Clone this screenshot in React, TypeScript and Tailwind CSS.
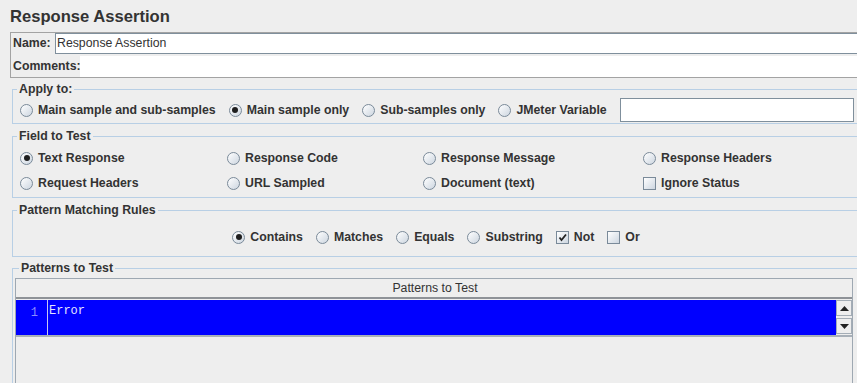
function Radio({ on }: { on?: boolean }) {
  return (
    <span className="flex h-[13px] w-[13px] shrink-0 items-center justify-center rounded-full border border-[#7a8a99] bg-linear-to-br from-white to-[#cdd6e0]">
      {on && <span className="h-[6px] w-[6px] rounded-full bg-[#1e1e1e]" />}
    </span>
  );
}

function Check({ on }: { on?: boolean }) {
  return (
    <span className="flex h-[13px] w-[13px] shrink-0 items-center justify-center border border-[#7a8a99] bg-linear-to-br from-white to-[#cdd6e0]">
      {on && (
        <svg width="9" height="9" viewBox="0 0 9 9">
          <path d="M1.5 4.5 L3.5 7 L8 1.5" fill="none" stroke="#222" strokeWidth="1.8" />
        </svg>
      )}
    </span>
  );
}

function Opt({ label, on, box }: { label: string; on?: boolean; box?: boolean }) {
  return (
    <label className="flex items-center gap-[5px] whitespace-nowrap">
      {box ? <Check on={on} /> : <Radio on={on} />}
      <span>{label}</span>
    </label>
  );
}

function Legend({ children }: { children: string }) {
  return <legend className="ml-[4px] px-[2px] leading-[14px] font-bold">{children}</legend>;
}

function Arrow({ up }: { up?: boolean }) {
  return (
    <div className="flex h-[16px] items-center justify-center border border-[#a4adb6] bg-[#eeeeee]">
      <svg width="9" height="5" viewBox="0 0 9 5">
        <path d={up ? "M0 5 L4.5 0 L9 5 Z" : "M0 0 L4.5 5 L9 0 Z"} fill="#222" />
      </svg>
    </div>
  );
}

export default function App() {
  return (
    <div className="h-[383px] w-[857px] overflow-hidden bg-[#eeeeee] font-['Liberation_Sans',Arial,sans-serif] text-[12.3px] text-[#333]">
      <div className="w-[870px]">
        <h1 className="h-[27px] pl-[10px] pt-[7px] text-[16.6px] leading-[20px] font-bold">Response Assertion</h1>

        <div className="ml-[10px] mt-[5px] border border-[#a3a3a3]">
          <div className="flex h-[21px] items-center">
            <span className="w-[44px] pl-[2px] font-bold">Name:</span>
            <div className="flex h-[21px] flex-1 items-center border border-[#7f8f9c] bg-white pl-[1px]">Response Assertion</div>
          </div>
          <div className="mt-[2px] flex h-[21px] items-center">
            <span className="w-[69px] pl-[2px] font-bold">Comments:</span>
            <div className="h-[21px] flex-1 bg-white" />
          </div>
        </div>

        <div className="ml-[12px] w-[848px]">
          <fieldset className="mt-[4px] border border-[#b8cfe5] pb-[1px] pt-[2px]">
            <Legend>Apply to:</Legend>
            <div className="flex h-[24px] items-center gap-[13px] pl-[7px] pr-[5px] font-bold">
              <Opt label="Main sample and sub-samples" />
              <Opt label="Main sample only" on />
              <Opt label="Sub-samples only" />
              <Opt label="JMeter Variable" />
              <div className="h-[24px] flex-1 border border-[#7f8f9c] bg-white" />
            </div>
          </fieldset>

          <fieldset className="mt-[5px] border border-[#b8cfe5] pb-[3px] pt-[4px]">
            <Legend>Field to Test</Legend>
            <div className="grid grid-cols-[207px_196px_220px_1fr] gap-y-[3px] pl-[7px] font-bold">
              <div className="flex h-[22px] items-center"><Opt label="Text Response" on /></div>
              <div className="flex h-[22px] items-center"><Opt label="Response Code" /></div>
              <div className="flex h-[22px] items-center"><Opt label="Response Message" /></div>
              <div className="flex h-[22px] items-center"><Opt label="Response Headers" /></div>
              <div className="flex h-[22px] items-center"><Opt label="Request Headers" /></div>
              <div className="flex h-[22px] items-center"><Opt label="URL Sampled" /></div>
              <div className="flex h-[22px] items-center"><Opt label="Document (text)" /></div>
              <div className="flex h-[22px] items-center"><Opt label="Ignore Status" box /></div>
            </div>
          </fieldset>

          <fieldset className="mt-[5px] border border-[#b8cfe5] pb-[8px] pt-[9px]">
            <Legend>Pattern Matching Rules</Legend>
            <div className="flex h-[22px] items-center justify-center gap-[13px] font-bold">
              <Opt label="Contains" on />
              <Opt label="Matches" />
              <Opt label="Equals" />
              <Opt label="Substring" />
              <Opt label="Not" box on />
              <Opt label="Or" box />
            </div>
          </fieldset>

          <fieldset className="mt-[4px] border border-[#b8cfe5] pl-[2px] pt-[3px]">
            <Legend>Patterns to Test</Legend>
            <div className="w-[838px] border border-[#9ea8b2]">
              <div className="flex h-[20px] items-center justify-center border-b-2 border-[#8e9297] pl-[2px]">Patterns to Test</div>
              <div className="mt-[1px] flex h-[35px] bg-[#0000ff]">
                <div className="w-[32px] border-r border-[#c8c8f0] pr-[9px] pt-[4px] text-right font-['Liberation_Mono',monospace] text-[12px] text-[#8a8aff]">1</div>
                <div className="flex-1 pl-[1px] pt-[4px] font-['Liberation_Mono',monospace] text-[12px] leading-[14px] text-[#e4e4ff]">Error</div>
                <div className="flex w-[16px] flex-col gap-[2px] bg-[#eeeeee]">
                  <Arrow up />
                  <Arrow />
                </div>
              </div>
              <div className="h-[60px] border-t-2 border-[#a8b0b8]" />
            </div>
          </fieldset>
        </div>
      </div>
    </div>
  );
}
